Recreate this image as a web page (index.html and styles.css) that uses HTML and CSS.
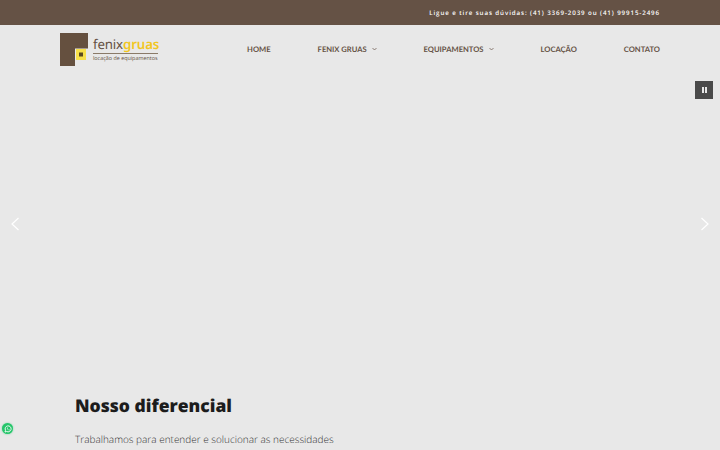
FILE: index.html
```html
<!DOCTYPE html>
<html lang="pt-BR">
  <head>
    <meta charset="UTF-8" />
    <meta name="viewport" content="width=device-width, initial-scale=1.0" />
    <title>Fenix Gruas</title>
    <link rel="stylesheet" href="styles.css">
  </head>
  <body>
    <div class="top-bar">
      <p class="phones">Ligue e tire suas dúvidas: (41) 3369-2039 ou (41) 99915-2496</p>
    </div>
    <header class="header">
      <a class="logo" href="#">
        <svg class="logo-mark" width="29" height="33" viewBox="0 0 29 33">
          <path d="M0 0H28V15.500H15V33H0Z" fill="#65503f" />
          <rect x="16" y="16" width="10" height="11" fill="#f7e04a" />
          <rect x="19" y="19.500" width="4" height="4" fill="#5a4a20" />
        </svg>
        <span class="logo-text">
          <span class="logo-name">fenix<b>gruas</b></span>
          <span class="logo-tag">locação de equipamentos</span>
        </span>
      </a>
      <nav class="menu">
        <a href="#">HOME</a>
        <a href="#">FENIX GRUAS
          <svg width="5" height="4" viewBox="0 0 5 4"><path d="M.5 1 2.500 3 4.500 1" /></svg>
        </a>
        <a href="#">EQUIPAMENTOS
          <svg width="5" height="4" viewBox="0 0 5 4"><path d="M.5 1 2.500 3 4.500 1" /></svg>
        </a>
        <a href="#">LOCAÇÃO</a>
        <a href="#">CONTATO</a>
      </nav>
    </header>
    <section class="slider">
      <button class="pause"><span></span><span></span></button>
      <svg class="arrow arrow-left" width="10" height="14" viewBox="0 0 10 14"><path d="M8.500 1 2 7l6.500 6" /></svg>
      <svg class="arrow arrow-right" width="10" height="14" viewBox="0 0 10 14"><path d="M1.500 1 8 7l-6.500 6" /></svg>
    </section>
    <section class="about">
      <h2>Nosso diferencial</h2>
      <p>Trabalhamos para entender e solucionar as necessidades</p>
    </section>
    <a class="whatsapp" href="#">
      <svg width="8" height="8" viewBox="0 0 8 8">
        <path d="M1 7 1.500 5.300A3 3 0 1 1 2.700 6.500Z" fill="none" stroke="#fff" stroke-width=".9" />
        <path d="M2.900 2.600 3.500 2.500 3.800 3.300 3.500 3.700C3.800 4.300 4.200 4.600 4.700 4.800L5.100 4.400 5.800 4.800 5.600 5.400C4.300 5.700 2.700 4.200 2.900 2.600Z" fill="#fff" />
      </svg>
    </a>
  </body>
</html>
```

FILE: styles.css
```css
body {
  margin: 0;
  height: 450px;
  overflow: hidden;
  font-family: "Open Sans", sans-serif;
  text-rendering: geometricPrecision;
  background-color: #e8e8e8;
}

.top-bar {
  height: 25px;
  display: flex;
  justify-content: flex-end;
  align-items: center;
  padding-right: 60px;
  background-color: #655245;
}

.phones {
  margin: 0 0 1px;
  font-size: 6.200px;
  font-weight: 600;
  letter-spacing: .9px;
  color: #fff;
}

.header {
  height: 50px;
  display: flex;
  align-items: center;
  justify-content: space-between;
  padding: 0 60px;
}

.logo {
  display: flex;
  align-items: flex-start;
  gap: 4px;
  margin-bottom: 1px;
  text-decoration: none;
}

.logo-mark {
  display: block;
}

.logo-text {
  display: flex;
  flex-direction: column;
  width: 65px;
  margin-top: 3px;
}

.logo-name {
  font-family: "Noto Sans", sans-serif;
  font-size: 13.300px;
  line-height: 16px;
  letter-spacing: -.15px;
  color: #655245;
  border-bottom: 1px solid #8a7a68;
  padding-bottom: 1px;
}

.logo-name b {
  font-weight: 600;
  color: #f2c61f;
}

.logo-tag {
  font-size: 5.400px;
  line-height: 8px;
  white-space: nowrap;
  color: #655245;
}

.menu {
  display: flex;
  gap: 47px;
  margin-bottom: 2px;
}

.menu a {
  display: flex;
  align-items: center;
  gap: 5px;
  font-family: "Lato", sans-serif;
  font-size: 7.600px;
  font-weight: 700;
  text-decoration: none;
  color: #655245;
}

.menu svg {
  fill: none;
  stroke: #655245;
  stroke-width: .7;
}

.slider {
  position: relative;
  height: 318px;
}

.pause {
  position: absolute;
  top: 6px;
  right: 7px;
  width: 18px;
  height: 18px;
  padding: 0;
  display: flex;
  justify-content: center;
  align-items: center;
  gap: 1px;
  border: 0;
  background-color: #4a4a4a;
}

.pause span {
  width: 2px;
  height: 6px;
  background-color: #e8e8e8;
}

.arrow {
  position: absolute;
  top: 142px;
  fill: none;
  stroke: #fff;
  stroke-width: 1.200;
}

.arrow-left {
  left: 10px;
}

.arrow-right {
  right: 10px;
}

.about {
  padding: 0 75px;
}

.about h2 {
  margin: 0;
  font-size: 17.500px;
  line-height: 26px;
  font-weight: 800;
  color: #1c1c1c;
}

.about p {
  margin: 11px 0 0;
  font-size: 10px;
  line-height: 18px;
  font-weight: 300;
  color: #333;
}

.whatsapp {
  position: fixed;
  left: 2px;
  bottom: 16px;
  width: 11px;
  height: 11px;
  display: flex;
  justify-content: center;
  align-items: center;
  border-radius: 50%;
  background-color: #25c56a;
  box-shadow: 0 0 2px rgba(37, 197, 106, .6);
}
```
